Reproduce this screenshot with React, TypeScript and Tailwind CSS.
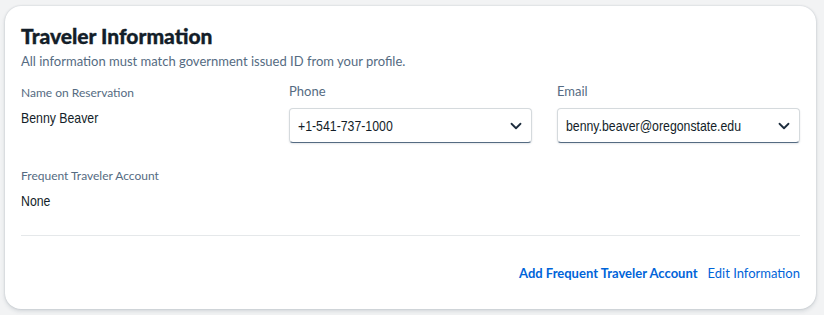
import { ChevronDown } from 'lucide-react';

const fiori = { fontFamily: 'Lato, "Noto Sans", sans-serif' };
const narrow = { fontFamily: '"Liberation Sans", Arial, sans-serif' };

// Arial Narrow is not installed, so squeeze Liberation Sans horizontally
function NarrowText({ children }: { children: string }) {
  return (
    <div className="w-fit origin-left scale-x-[0.82] whitespace-nowrap text-[15px] leading-[22px] text-[#131e29]" style={narrow}>
      {children}
    </div>
  );
}

function SelectBox({ value }: { value: string }) {
  return (
    <div className="flex h-[35px] items-center justify-between rounded-[4px] border border-[#d5dadd] border-b-[#556b82] bg-white pl-[8px] pr-[6px] shadow-[0_1px_2px_rgba(34,53,72,0.12)]">
      <div className="min-w-0 flex-1">
        <NarrowText>{value}</NarrowText>
      </div>
      <ChevronDown className="h-[18px] w-[18px] shrink-0 text-[#1d2d3e]" strokeWidth={2.4} />
    </div>
  );
}

export default function App() {
  return (
    <div className="min-h-[315px] bg-[#f2f3f4] pl-[5px] pt-[6px]" style={fiori}>
      <section className="w-[811px] rounded-[16px] bg-white px-[16px] pb-[27px] pt-[18px] shadow-[0_0_2px_rgba(34,53,72,0.2),0_2px_4px_rgba(34,53,72,0.15)]">
        <h2 className="text-[21px] font-black leading-[24px] text-[#131e29] [-webkit-text-stroke:0.35px_#131e29]">
          Traveler Information
        </h2>
        <p className="mt-[4px] text-[13px] leading-[18px] text-[#556b82]">
          All information must match government issued ID from your profile.
        </p>

        <div className="mt-[12px] grid grid-cols-3 gap-x-[25px]">
          <div>
            <div className="pt-[3px] text-[12px] leading-[16px] text-[#556b82]">Name on Reservation</div>
            <div className="mt-[6px]">
              <NarrowText>Benny Beaver</NarrowText>
            </div>
          </div>
          <div>
            <div className="text-[13px] leading-[18px] text-[#556b82]">Phone</div>
            <div className="mt-[8px]">
              <SelectBox value="+1-541-737-1000" />
            </div>
          </div>
          <div>
            <div className="text-[13px] leading-[18px] text-[#556b82]">Email</div>
            <div className="mt-[8px]">
              <SelectBox value="benny.beaver@oregonstate.edu" />
            </div>
          </div>
        </div>

        <div className="mt-[25px] text-[12px] leading-[16px] text-[#556b82]">Frequent Traveler Account</div>
        <div className="mt-[6px]">
          <NarrowText>None</NarrowText>
        </div>

        <div className="mt-[23px] h-px bg-[#e5e8ea]" />

        <div className="mt-[28px] flex justify-end gap-[10px] text-[13px] leading-[18px] text-[#0064d9]">
          <a className="font-bold">Add Frequent Traveler Account</a>
          <a>Edit Information</a>
        </div>
      </section>
    </div>
  );
}
